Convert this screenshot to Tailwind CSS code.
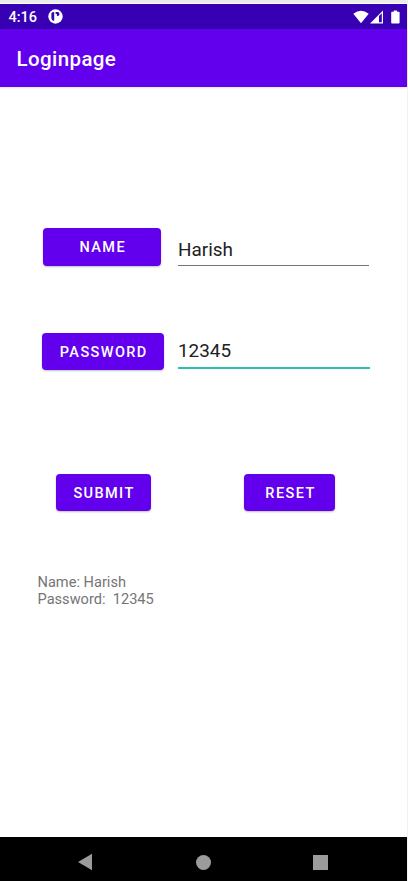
<!DOCTYPE html>
<html lang="en">
<head>
<meta charset="utf-8">
<title>Loginpage</title>
<script src="https://cdn.jsdelivr.net/npm/@tailwindcss/browser@4"></script>
</head>
<body class="bg-white font-['Roboto',sans-serif]">
<div class="flex h-[881px] w-[408px] flex-col border-r border-[#f1f1f1] bg-white">
  <div class="h-1 shrink-0 border-b border-white bg-[#ececec]"></div>
  <header class="shrink-0">
    <div class="flex h-[25px] items-center bg-[#3700b3] pl-[8.5px] pr-[7px] text-white">
      <span class="w-[39.5px] whitespace-nowrap pt-[3px] text-[14.5px] font-medium leading-none">4:16</span>
      <svg class="h-[15px] w-[15px]" viewBox="0 0 15 15"><circle cx="7.5" cy="7.5" r="7.2" fill="#fff"/><path d="M3.4 4.2Q4.2 3 6.2 3v8.8H5Q3.4 10.8 3.4 9zM7.6 3h2q1.9.2 1.9 2T9.6 7.1H8.9V5H7.6z" fill="#3700b3"/></svg>
      <svg class="ml-auto h-[14px] w-[16px]" viewBox="0 0 16 14"><path d="M.3 3.8Q8-2.1 15.7 3.8L8 13.3z" fill="#fff"/></svg>
      <svg class="ml-px h-[14px] w-[13px]" viewBox="0 0 13 14"><path d="M13 .5v13H0z" fill="#fff"/><path d="M9 6l2.8-2.8v9H9z" fill="#3700b3"/></svg>
      <svg class="ml-[8px] h-[14px] w-[9px]" viewBox="0 0 9 14"><path d="M2.7.5h3.4v1.3h1.7q.8 0 .8.8v10.1q0 .8-.8.8H1q-.8 0-.8-.8V2.6q0-.8.8-.8h1.7z" fill="#fff"/></svg>
    </div>
    <div class="flex h-[58px] items-center bg-[#6200ee] pl-[16.5px] pt-[2px] shadow-[0_1px_2px_rgba(0,0,0,0.12)]">
      <h1 class="text-[20.5px] font-medium leading-none tracking-[0.4px] text-white">Loginpage</h1>
    </div>
  </header>

  <main class="flex grow flex-col pt-[141px]">
    <div class="flex h-[38px] pl-[42px]">
      <button class="ml-[0.5px] h-[38px] w-[118.5px] rounded-[4px] bg-[#6200ee] pt-[3px] pl-[2px] text-[14.5px] font-medium leading-none tracking-[1.4px] text-white shadow-[0_1px_2px_rgba(0,0,0,0.25)]">NAME</button>
      <div class="ml-[17px] w-[191px] border-b border-[#757575] pt-[11px] text-[18.9px] leading-[22px] text-[#212121]">Harish</div>
    </div>
    <div class="mt-[67px] flex h-[37px] pl-[42px]">
      <button class="h-[37px] w-[121.5px] rounded-[4px] bg-[#6200ee] pt-[3px] pl-[2px] text-[14.5px] font-medium leading-none tracking-[1.4px] text-white shadow-[0_1px_2px_rgba(0,0,0,0.25)]">PASSWORD</button>
      <div class="ml-[14.5px] h-[36px] w-[192px] border-b-2 border-[#2fbfb2] pt-[7px] text-[18.9px] leading-[22px] text-[#212121]">12345</div>
    </div>
    <div class="mt-[103.5px] flex h-[37.5px] pl-[56px]">
      <button class="h-[37.5px] w-[95px] rounded-[4px] bg-[#6200ee] pt-[3px] pl-px text-[14.5px] font-medium leading-none tracking-[1.4px] text-white shadow-[0_1px_2px_rgba(0,0,0,0.25)]">SUBMIT</button>
      <button class="ml-[93px] h-[37.5px] w-[91px] rounded-[4px] bg-[#6200ee] pt-[3px] pl-[2px] text-[14.5px] font-medium leading-none tracking-[1.4px] text-white shadow-[0_1px_2px_rgba(0,0,0,0.25)]">RESET</button>
    </div>
    <p class="mt-[62.5px] whitespace-pre pl-[37.5px] text-[14.6px] leading-[17.5px] text-[#757575]">Name: Harish
Password:  12345</p>
  </main>

  <nav class="flex h-[44px] shrink-0 items-center bg-black pl-[78px] pt-[6px]">
    <svg class="h-[18px] w-[14px]" viewBox="0 0 14 18"><path d="M14 .7v16.6L0 9z" fill="#9b9b9b"/></svg>
    <span class="ml-[104px] h-[15px] w-[15px] rounded-full bg-[#9b9b9b]"></span>
    <span class="ml-[102px] h-[15px] w-[15px] bg-[#9b9b9b]"></span>
  </nav>
</div>
</body>
</html>
